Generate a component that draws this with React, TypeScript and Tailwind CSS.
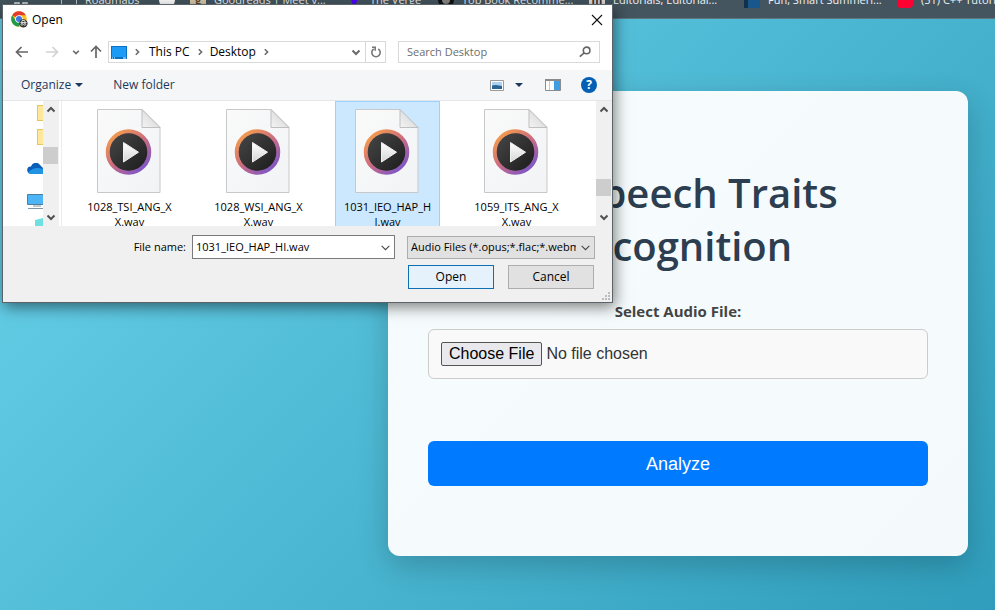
import type { ReactNode } from "react";

const ui = "font-['Open_Sans','Noto_Sans',sans-serif]";

type Bookmark = { label: string; icon: ReactNode; width: string };

const bookmarks: Bookmark[] = [
  { label: "Roadmaps", width: "w-[98px]", icon: <span className="h-3 w-4 rounded-xs border border-[#c3cbd0]" /> },
  { label: "", width: "w-[31px]", icon: <span className="h-4 w-4 rounded-full bg-white" /> },
  { label: "Goodreads | Meet y...", width: "w-[156px]", icon: <span className="h-4 w-4 rounded-xs bg-[#d9c9a8] text-center font-bold leading-4 text-[#5b4630]">g</span> },
  { label: "The Verge", width: "w-[92px]", icon: <svg className="h-4 w-4" viewBox="0 0 16 16"><path d="M3 2h11L8 16z" fill="#5200ff" /></svg> },
  { label: "Top Book Recomme...", width: "w-[151px]", icon: <span className="h-4 w-4 rounded-full border-4 border-[#111] bg-[#888]" /> },
  { label: "Editorials, Editorial...", width: "w-[155px]", icon: <span className="h-4 w-4 border-b-2 border-white bg-[#ddd] text-center font-bold leading-4 text-[#333]">m</span> },
  { label: "Fun, Smart Summeri...", width: "w-[153px]", icon: <span className="h-4 w-4 border-l-4 border-[#12304a] bg-[#17578c]" /> },
  { label: "(51) C++ Tutorial", width: "w-[130px]", icon: <span className="h-4 w-4 rounded-sm bg-[#ff0033]" /> },
];

const files = [
  { first: "1028_TSI_ANG_X", rest: "X.wav", selected: false },
  { first: "1028_WSI_ANG_X", rest: "X.wav", selected: false },
  { first: "1031_IEO_HAP_H", rest: "I.wav", selected: true },
  { first: "1059_ITS_ANG_X", rest: "X.wav", selected: false },
];

function Chevron({ dir, className = "" }: { dir: "down" | "up" | "right"; className?: string }) {
  const d = { down: "M1.5 3.5 5 7l3.5-3.5", up: "M1.5 6.5 5 3l3.5 3.5", right: "M3.5 1.5 7 5 3.5 8.5" }[dir];
  return (
    <svg className={`shrink-0 ${className}`} viewBox="0 0 10 10" fill="none" stroke="currentColor" aria-hidden="true">
      <path d={d} />
    </svg>
  );
}

function Arrow({ d, className }: { d: string; className: string }) {
  return (
    <svg className={`h-4 w-4 ${className}`} viewBox="0 0 16 16" fill="none" stroke="currentColor" strokeWidth="1.7" aria-hidden="true">
      <path d={d} />
    </svg>
  );
}

function ChromeIcon() {
  return (
    <svg className="h-[17px] w-[17px]" viewBox="0 0 17 17" aria-hidden="true">
      <circle cx="8" cy="8" r="7.8" fill="#fbc116" />
      <path d="M8 8 1.2 4.2A7.8 7.8 0 0 1 14.8 4.2L8 4.3Z" fill="#e33b2e" />
      <path d="M1.2 4.2A7.8 7.8 0 0 0 7.5 15.8L11 9.8 5 9.9Z" fill="#229a4b" />
      <circle cx="8" cy="8" r="3.8" fill="#fff" />
      <circle cx="8" cy="8" r="3" fill="#3b78e7" />
      <circle cx="12.4" cy="12.4" r="4.2" fill="#333" />
      <path d="M9.5 11.5h6M10.7 11l.5-1.5h2.4l.5 1.5" stroke="#fff" strokeWidth=".8" fill="none" />
      <circle cx="11" cy="13.3" r="1" fill="none" stroke="#fff" strokeWidth=".7" />
      <circle cx="13.8" cy="13.3" r="1" fill="none" stroke="#fff" strokeWidth=".7" />
    </svg>
  );
}

function MediaFileIcon() {
  return (
    <svg className="h-[84px] w-[66px] shrink-0" viewBox="0 0 66 84" aria-hidden="true">
      <defs>
        <linearGradient id="page" x1="0" y1="0" x2="1" y2="1">
          <stop offset="0" stopColor="#fafafa" />
          <stop offset="1" stopColor="#f1f3f5" />
        </linearGradient>
        <linearGradient id="fold" x1="0" y1="1" x2="1" y2="0">
          <stop offset="0" stopColor="#f4f4f4" />
          <stop offset="1" stopColor="#cfcfcf" />
        </linearGradient>
        <linearGradient id="ring" x1=".1" y1=".1" x2=".8" y2=".95">
          <stop offset="0" stopColor="#f29a4e" />
          <stop offset=".5" stopColor="#cd6c80" />
          <stop offset="1" stopColor="#8257c4" />
        </linearGradient>
        <linearGradient id="disc" x1="0" y1="0" x2="1" y2="1">
          <stop offset="0" stopColor="#474747" />
          <stop offset="1" stopColor="#1c1c1c" />
        </linearGradient>
        <linearGradient id="play" x1="0" y1="0" x2="0" y2="1">
          <stop offset="0" stopColor="#fff" />
          <stop offset="1" stopColor="#d6d6d6" />
        </linearGradient>
      </defs>
      <path d="M.5.5h44.5l18 18v65H.5z" fill="url(#page)" stroke="#c6c8ca" />
      <path d="M45 .5v18h18z" fill="url(#fold)" stroke="#bdbfc1" />
      <circle cx="31.5" cy="43" r="20.5" fill="#2a2a2a" stroke="url(#ring)" strokeWidth="4.5" />
      <circle cx="31.5" cy="43" r="18.8" fill="url(#disc)" />
      <path d="M26.500 33.500v19.500L41.500 43.200Z" fill="url(#play)" stroke="#f0f0f0" strokeLinejoin="round" />
    </svg>
  );
}

function Scrollbar({ thumb }: { thumb: string }) {
  return (
    <div className="flex w-4 shrink-0 flex-col bg-[#f0f0f0] pr-px text-[#505050]">
      <Chevron dir="up" className="mx-auto my-1 h-[10px] w-[10px] stroke-2" />
      <div className={`h-[17px] w-[15px] bg-[#cdcdcd] ${thumb}`} />
      <Chevron dir="down" className="mx-auto mt-auto mb-1 h-[10px] w-[10px] stroke-2" />
    </div>
  );
}

function FolderIcon() {
  return <span className="ml-[34px] h-4 w-4 shrink-0 border border-[#e3c667] bg-[#ffe79a]" />;
}

function OpenDialog() {
  return (
    <section
      role="dialog"
      aria-label="Open"
      className={`absolute top-1 left-[2px] flex w-[611px] flex-col border border-[#5a6468] bg-white text-xs text-black shadow-[2px_4px_14px_rgba(0,0,0,0.5)] ${ui}`}
    >
      <header className="flex h-[29px] items-center gap-1 pr-[9px] pl-2">
        <ChromeIcon />
        <h2 className="flex-1">Open</h2>
        <button aria-label="Close">
          <svg className="h-3 w-3" viewBox="0 0 12 12" stroke="#111" strokeWidth="1.1" aria-hidden="true">
            <path d="m1 1 10 10M11 1 1 11" />
          </svg>
        </button>
      </header>

      <nav className="flex h-9 items-center pr-3 pl-[11px] text-[#6a6a6a]">
        <button aria-label="Back"><Arrow className="text-[#666]" d="M14 8H3M7.500 3 2.500 8l5 5" /></button>
        <button aria-label="Forward" className="ml-[14px]"><Arrow className="text-[#d2d2d2]" d="M2 8h11M8.500 3l5 5-5 5" /></button>
        <button aria-label="Recent" className="ml-3"><Chevron dir="down" className="h-2 w-2 stroke-2" /></button>
        <button aria-label="Up" className="ml-2"><Arrow className="text-[#666]" d="M8 14V3M3 7.500l5-5 5 5" /></button>
        <div className="ml-1 flex h-[22px] flex-1 items-center border border-[#d9d9d9] pl-[2px]">
          <svg className="h-[13px] w-4" viewBox="0 0 16 13" aria-hidden="true">
            <path d="M0 0h16v13H0z" fill="#0b6fc2" />
            <path d="M1 1h14v10H1z" fill="#1b9bf5" />
            <path d="M1 12h1M3 12h1M12 12h3" stroke="#dff" />
          </svg>
          <Chevron dir="right" className="mx-[6px] h-2 w-2 stroke-2" />
          <button className="ml-[2px] text-black">This PC</button>
          <Chevron dir="right" className="mx-[6px] h-2 w-2 stroke-2" />
          <button className="text-black">Desktop</button>
          <Chevron dir="right" className="mx-[6px] h-2 w-2 stroke-2" />
          <button aria-label="Previous locations" className="mr-1 ml-auto"><Chevron dir="down" className="h-[10px] w-[10px] stroke-2" /></button>
          <button aria-label="Refresh" className="flex h-full w-5 items-center justify-center border-l border-[#d9d9d9]">
            <svg className="h-3 w-3" viewBox="0 0 12 12" fill="none" stroke="#777" strokeWidth="1.600" aria-hidden="true">
              <path d="M8.300 3A4.200 4.200 0 1 1 3.700 3M2 1.300h3.200v3.400" />
            </svg>
          </button>
        </div>
        <label className="ml-3 flex h-[22px] w-[202px] items-center border border-[#d9d9d9] px-2">
          <input aria-label="Search Desktop" placeholder="Search Desktop" className="min-w-0 flex-1 text-[11px] outline-none placeholder:text-[#6d6d6d]" />
          <svg className="h-3 w-3" viewBox="0 0 12 12" fill="none" stroke="#666" strokeWidth="1.600" aria-hidden="true">
            <circle cx="7.600" cy="4.400" r="3.300" />
            <path d="M5.200 6.800.8 10.600" />
          </svg>
        </label>
      </nav>

      <div className="flex h-[31px] items-center border-b border-[#e4e6e9] bg-[#f5f6f7] pr-[15px] pl-[18px] text-[#1e395b]">
        <button className="flex items-center gap-1">
          Organize
          <svg className="h-1 w-2" viewBox="0 0 8 4" fill="currentColor" aria-hidden="true"><path d="M0 0h8L4 4z" /></svg>
        </button>
        <button className="ml-[30px]">New folder</button>
        <button aria-label="Change view" className="ml-auto flex items-center gap-[11px]">
          <svg className="h-[11px] w-[14px]" viewBox="0 0 14 11" aria-hidden="true">
            <path d="M.5.5h13v10H.5z" fill="#fff" stroke="#9a9a9a" />
            <path d="M2 2h10v7H2z" fill="#a9d2f3" />
            <path d="M2 5.500 6 5l6 1v3H2z" fill="#2b6593" />
          </svg>
          <svg className="h-1 w-2" viewBox="0 0 8 4" fill="currentColor" aria-hidden="true"><path d="M0 0h8L4 4z" /></svg>
        </button>
        <button aria-label="Preview pane" className="ml-[22px]">
          <svg className="h-3 w-4" viewBox="0 0 16 12" aria-hidden="true">
            <path d="M.5.5h15v11H.5z" fill="#fff" stroke="#8b8b8b" />
            <path d="M0 0h16v2H0z" fill="#8b8b8b" />
            <path d="M4.500 2v9" stroke="#c8c8c8" />
            <path d="M9 2h6v9H9z" fill="#3f9de4" />
          </svg>
        </button>
        <button aria-label="Help" className="ml-5 h-4 w-4 rounded-full bg-[#0560b5] text-center font-bold leading-4 text-white">?</button>
      </div>

      <div className="flex h-[125px] overflow-hidden">
        <div className="flex w-10 flex-col overflow-hidden pt-1">
          <FolderIcon />
          <span className="h-2 shrink-0" />
          <FolderIcon />
          <svg className="mt-[18px] ml-6 h-[11px] w-5 shrink-0" viewBox="0 0 20 11" aria-hidden="true">
            <path d="M3.500 10.500a3.500 3.500 0 0 1 .5-7A5 5 0 0 1 13 2l4 4z" fill="#0b5fb8" />
            <path d="M1 9.500C4 6 8 4.500 11 5l8 1v5H4Q2 11 1 9.500z" fill="#2093e4" />
          </svg>
          <svg className="mt-5 ml-6 h-[15px] w-5 shrink-0" viewBox="0 0 20 15" aria-hidden="true">
            <path d="M.5.5h19v10H.5z" fill="#4db5f5" stroke="#4d7f9c" />
            <path d="M6 12h8M1 14.500h18" stroke="#8197a3" />
          </svg>
          <svg className="mt-[9px] ml-8 h-4 w-4 shrink-0" viewBox="0 0 16 16" aria-hidden="true">
            <path d="M0 2 8 0v16H0z" fill="#6fe0df" />
          </svg>
        </div>
        <Scrollbar thumb="mt-7" />
        <div className="ml-[2px] flex flex-1 gap-6 border-l border-[#ededed] pl-[15px]">
          {files.map((f) => (
            <button
              key={f.first}
              aria-pressed={f.selected}
              className={`flex h-40 w-[105px] shrink-0 flex-col items-center border pt-[7px] text-[11px] leading-[15px] ${
                f.selected ? "border-[#99d1ff] bg-[#cce8ff]" : "border-transparent"
              }`}
            >
              <MediaFileIcon />
              <span className="mt-[6px]">{f.first}</span>
              <span>{f.rest}</span>
            </button>
          ))}
        </div>
        <Scrollbar thumb="mt-[60px]" />
      </div>

      <footer className="bg-[#f0f0f0] pt-[9px] pr-[17px] pb-[13px]">
        <div className="flex items-center text-[11px]">
          <label htmlFor="filename" className="ml-auto">File name:</label>
          <div className="ml-[6px] flex h-6 w-[203px] items-center border border-[#7a7a7a] bg-white px-[3px]">
            <input id="filename" defaultValue="1031_IEO_HAP_HI.wav" className="min-w-0 flex-1 outline-none" />
            <button aria-label="Show file names"><Chevron dir="down" className="h-[11px] w-[11px] text-[#444]" /></button>
          </div>
          <div className="relative ml-3 flex h-[23px] w-[188px] items-center border border-[#adadad] bg-[#e1e1e1]">
            <select aria-label="File type" className="h-full w-[168px] appearance-none overflow-hidden pl-[3px] text-clip whitespace-nowrap outline-none">
              <option>Audio Files (*.opus;*.flac;*.webm;*.weba)</option>
            </select>
            <Chevron dir="down" className="pointer-events-none ml-[4px] h-[11px] w-[11px] text-[#444]" />
          </div>
        </div>
        <div className="mt-[6px] flex justify-end gap-[14px] pr-px">
          <button className="h-6 w-[86px] border border-[#0f6fb5] bg-[#e5f1fb]">Open</button>
          <button className="h-6 w-[86px] border border-[#adadad] bg-[#e1e1e1]">Cancel</button>
        </div>
      </footer>
      <svg className="absolute right-[2px] bottom-[2px] h-2 w-2" viewBox="0 0 8 8" fill="#bcbcbc" aria-hidden="true">
        <path d="M6 0h2v2H6zM6 3h2v2H6zM3 3h2v2H3zM6 6h2v2H6zM3 6h2v2H3zM0 6h2v2H0z" />
      </svg>
    </section>
  );
}

export default function App() {
  return (
    <div className="relative flex min-h-screen flex-col overflow-hidden bg-[linear-gradient(135deg,#6dd5ed_0%,#2f9dbb_100%)]">
      <div className={`flex h-[19px] items-end overflow-hidden border-b border-[#61757e] bg-[#44555f] pb-[10px] pl-[14px] text-[11px] leading-4 text-[#eef2f4] ${ui}`}>
        <svg className="mr-[33px] h-[14px] w-[14px] shrink-0" viewBox="0 0 14 14" fill="none" stroke="#dfe5e8" strokeWidth="1.500" aria-hidden="true">
          <path d="M1 1h4v4H1zM9 1h4v4H9zM1 9h4v4H1zM9 9h4v4H9z" />
        </svg>
        {bookmarks.map((b, i) => (
          <a key={i} href="#" aria-label={b.label || "GitHub"} className={`flex shrink-0 items-end gap-2 whitespace-nowrap ${b.width}`}>
            {b.icon}
            {b.label}
          </a>
        ))}
      </div>

      <main className="flex flex-1 items-start justify-end px-[27px] pt-[72px] pb-[54px]">
        <div className={`flex w-full max-w-[580px] flex-col rounded-xl bg-white/95 px-10 pt-[75px] pb-[70px] text-center shadow-[0_10px_30px_rgba(0,0,0,0.2)] ${ui}`}>
          <h1 className="text-[40px] leading-[53px] font-semibold text-[#2c3e50]">
            <span className="mr-3">AI</span> Speech Traits
            <br />
            Recognition
          </h1>
          <label htmlFor="audio" className="mt-[29px] text-[15px] leading-5 font-bold text-[#444]">
            Select Audio File:
          </label>
          <input
            id="audio"
            type="file"
            className="mt-2 h-[50px] w-full rounded-md border border-[#ccc] bg-[#f9f9f9] px-3 py-3 font-['Liberation_Sans',Arial,sans-serif] text-base leading-6 text-[#333] file:mr-1 file:h-6 file:rounded-xs file:border file:border-solid file:border-[#555] file:bg-[#e9e9ed] file:px-[7px] file:leading-5 file:text-black"
          />
          <button className="mt-[62px] h-[45px] rounded-md bg-[#007bff] font-['Liberation_Sans',Arial,sans-serif] text-lg leading-6 text-white">
            Analyze
          </button>
        </div>
      </main>

      <OpenDialog />
    </div>
  );
}
